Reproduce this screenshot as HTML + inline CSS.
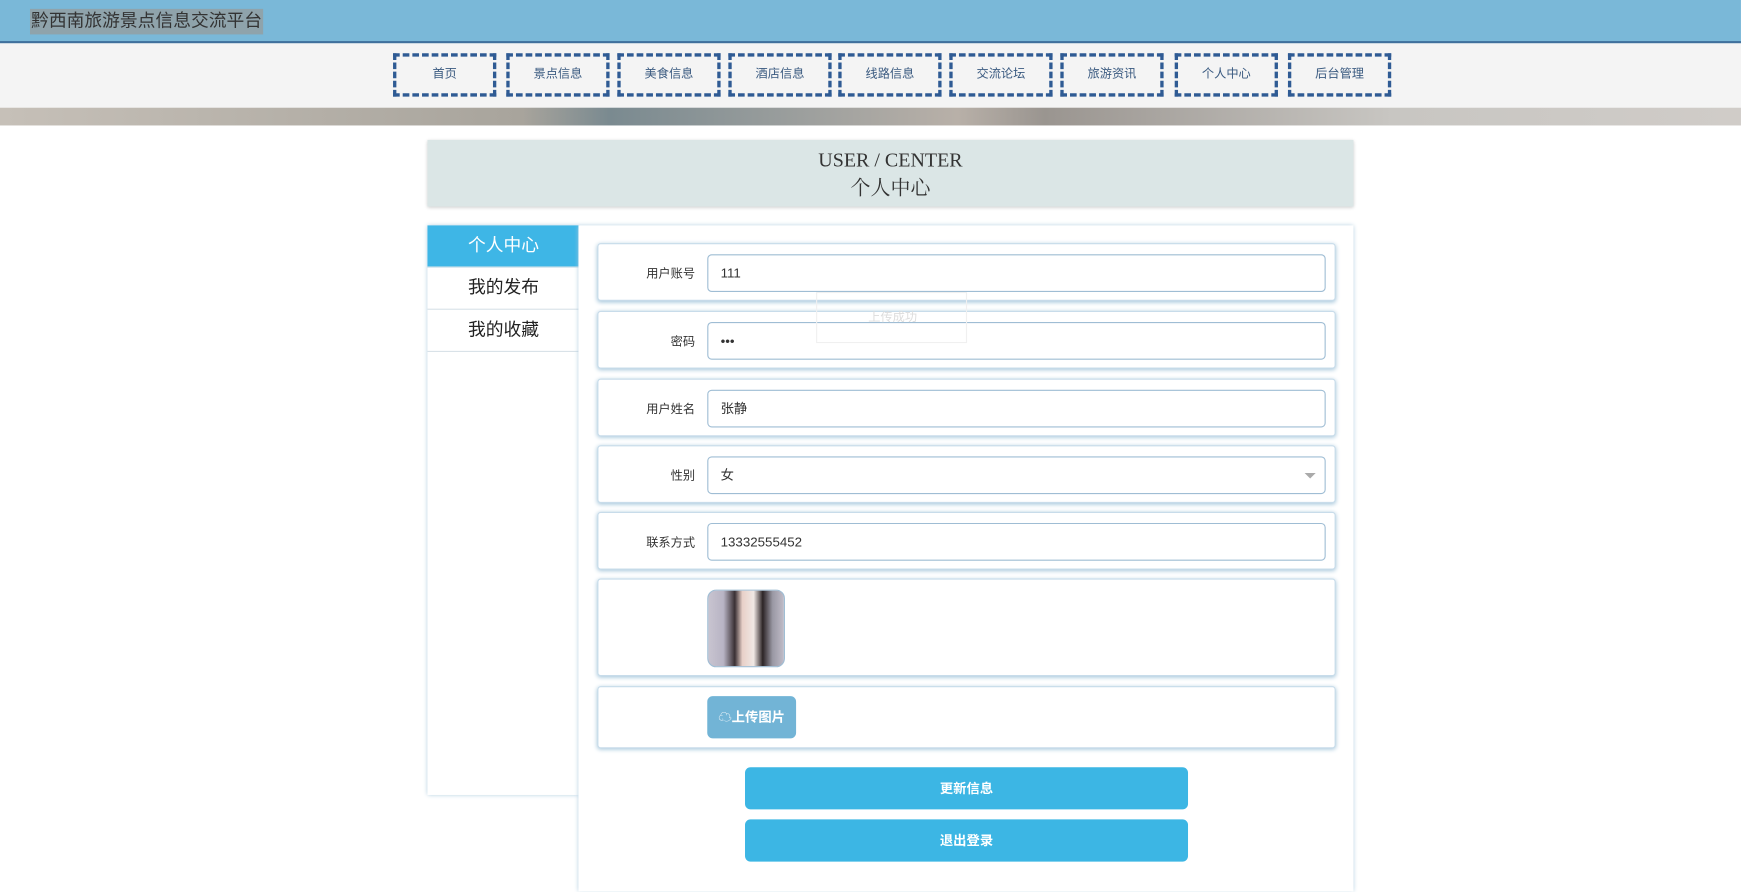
<!DOCTYPE html>
<html><head><meta charset="utf-8"><style>
*{box-sizing:border-box;margin:0;padding:0}
html,body{width:1741px;height:859px;overflow:hidden;background:#fff}
#w{position:absolute;left:0;top:0;width:1568px;height:774px;transform:scale(1.1103);transform-origin:0 0;font-family:"Liberation Sans","Noto Sans CJK SC",sans-serif}
.hdr{position:absolute;left:0;top:0;width:1568px;height:39px;background:#7ab8d8;border-bottom:2px solid #40709c}
.hdr span{position:absolute;left:27px;top:8px;background:#8fa3ab;color:#333;font-size:16px;padding:0 1px;line-height:23px}
.nav{position:absolute;left:0;top:39px;width:1568px;height:58px;background:#f4f4f4}
.nav a{position:absolute;top:9px;width:93px;height:39px;border:3px dashed #2f5b94;font-size:11px;color:#3a5a80;text-align:center;line-height:33px;text-decoration:none}
.ban{position:absolute;left:0;top:97px;width:1568px;height:16px;background:linear-gradient(90deg,#c6c0b8,#a8a49c 30%,#7a8a90 35%,#b8b0a8 55%,#9a9590 60%,#c8c6c2 80%,#d0ccc8)}
.tt{position:absolute;left:385px;top:126px;width:834px;height:60px;background:#dbe6e6;text-align:center;font-family:"Liberation Serif","Noto Serif CJK SC",serif;color:#333;font-size:18px;line-height:25px;padding-top:6px;box-shadow:0 1px 3px #ccc}
.side{position:absolute;left:385px;top:203px;width:137px;height:513px;background:#fff;box-shadow:0 0 4px #a8c8dc}
.side div{height:38px;line-height:37px;text-align:center;font-size:16px;color:#222;border-bottom:1px solid #d8e2e8}
.side div.on{background:#3eb6e6;color:#fff}
.main{position:absolute;left:521px;top:203px;width:698px;height:600px;background:#fff;box-shadow:0 0 4px #a8c8dc}
.row{position:absolute;left:538px;width:665px;border:1px solid #c8dcea;border-radius:3px;box-shadow:0 1px 4px #a8c8dc;background:#fff}
.row label{position:absolute;right:576px;top:18px;font-size:11px;color:#333}
.row .in{position:absolute;left:98px;top:9px;width:557px;height:34px;border:1px solid #9fbdd4;border-radius:4px;font-size:12px;color:#333;line-height:32px;padding-left:11px}
.btn{position:absolute;left:671px;width:399px;height:38px;background:#3cb6e4;border-radius:5px;color:#fff;font-size:12px;font-weight:bold;text-align:center;line-height:38px}
</style></head><body><div id="w">
<div class="hdr"><span>黔西南旅游景点信息交流平台</span></div>
<div class="nav">
<a style="left:354px">首页</a><a style="left:456px">景点信息</a><a style="left:556px">美食信息</a><a style="left:656px">酒店信息</a><a style="left:755px">线路信息</a><a style="left:855px">交流论坛</a><a style="left:955px">旅游资讯</a><a style="left:1058px">个人中心</a><a style="left:1160px">后台管理</a>
</div>
<div class="ban"></div>
<div class="tt">USER / CENTER<br>个人中心</div>
<div class="side"><div class="on">个人中心</div><div>我的发布</div><div>我的收藏</div></div>
<div class="main"></div>
<div class="row" style="top:219px;height:52px"><label>用户账号</label><div class="in">111</div></div>
<div class="row" style="top:280px;height:52px"><label>密码</label><div class="in">•••</div></div>
<div class="row" style="top:341px;height:52px"><label>用户姓名</label><div class="in">张静</div></div>
<div class="row" style="top:401px;height:52px"><label>性别</label><div class="in">女<span style="position:absolute;right:8px;top:14px;border:5px solid transparent;border-top:5px solid #aaa"></span></div></div>
<div class="row" style="top:461px;height:52px"><label>联系方式</label><div class="in">13332555452</div></div>
<div class="row" style="top:521px;height:88px"><div style="position:absolute;left:98px;top:9px;width:70px;height:70px;border-radius:8px;border:1px solid #9fbdd4;background:linear-gradient(90deg,#c8c4d0 0%,#b8b4c4 20%,#3a3034 35%,#e8d0c8 45%,#f0e8e4 60%,#2c2426 72%,#9a98a4 85%,#c0bcc8)"></div></div>
<div class="row" style="top:618px;height:56px"><div style="position:absolute;left:98px;top:8px;width:80px;height:38px;border-radius:5px;background:#72b4d6;color:#fff;font-size:12px;font-weight:bold;line-height:38px;text-align:center">☁上传图片</div></div>
<div style="position:absolute;left:735px;top:263px;width:136px;height:46px;border:1px solid #f0f0f0;color:#ddd;font-size:11px;line-height:44px;padding-left:46px">上传成功</div>
<div class="btn" style="top:691px">更新信息</div>
<div class="btn" style="top:738px">退出登录</div>
</div></body></html>
